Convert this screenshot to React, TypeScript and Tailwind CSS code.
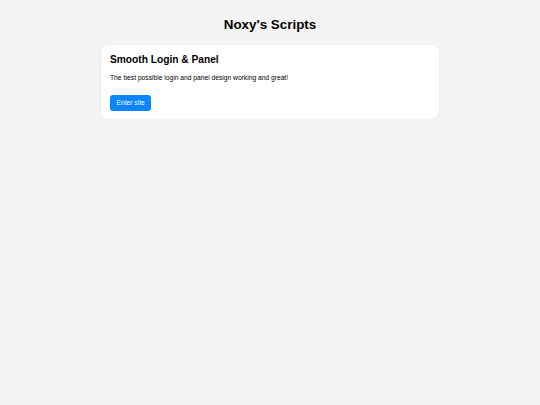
export default function App() {
  return (
    <div className="min-h-[405px] bg-[#f4f4f4] px-[8px] pt-[17px] font-['Liberation_Sans',Arial,sans-serif] text-black">
      <h1 className="text-center text-[13.4px] font-bold leading-[15px]">Noxy's Scripts</h1>

      <div className="mx-auto mt-[13px] w-[338px] rounded-[8px] bg-white px-[9px] pt-[8px] pb-[8px] shadow-[0_0_3px_rgba(0,0,0,0.06)]">
        <h2 className="text-[10.2px] font-bold leading-[13px]">Smooth Login &amp; Panel</h2>
        <p className="mt-[8px] text-[6.7px] leading-[8px]">
          The best possible login and panel design working and great!
        </p>
        <button className="mt-[13px] block h-[16px] rounded-[3px] bg-[#0a84ff] px-[6.5px] text-[6.7px] leading-[16px] text-white">
          Enter site
        </button>
      </div>
    </div>
  );
}
